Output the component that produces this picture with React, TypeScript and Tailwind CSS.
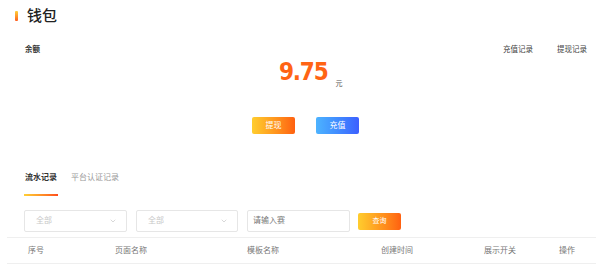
import { ChevronDown } from 'lucide-react';

const columns = [
  { label: '序号', className: 'w-[87px]' },
  { label: '页面名称', className: 'w-[132px]' },
  { label: '模板名称', className: 'w-[134px]' },
  { label: '创建时间', className: 'w-[103px]' },
  { label: '展示开关', className: 'w-[75px]' },
  { label: '操作', className: 'flex-1' },
];

function FilterSelect({ className }: { className: string }) {
  return (
    <div
      className={`h-[22px] flex items-center justify-between pl-[11px] pr-[9px] border border-[#e6e6e6] rounded-[2px] ${className}`}
    >
      <span className="text-[8px] text-[#c8c8c8]">全部</span>
      <ChevronDown className="size-[8px] text-[#b0b0b0]" strokeWidth={1.5} />
    </div>
  );
}

export default function App() {
  return (
    <div className="w-[600px] h-[272px] bg-white overflow-hidden text-[#333] font-['Liberation_Sans','Noto_Sans_CJK_SC',sans-serif]">
      {/* title */}
      <div className="h-[32px] flex items-center pl-[15px]">
        <div className="w-[3px] h-[10px] rounded-[1px] bg-gradient-to-b from-[#ffcf36] to-[#ff5a1f]" />
        <span className="ml-[9px] text-[15px] leading-[16px] font-medium text-[#222]">钱包</span>
      </div>

      {/* balance */}
      <div className="mt-[10px] h-[16px] flex items-center justify-between pl-[25px] pr-[13px]">
        <span className="text-[7.5px] font-bold text-[#333]">余额</span>
        <div className="flex gap-[24px] text-[7.5px] text-[#444]">
          <span>充值记录</span>
          <span>提现记录</span>
        </div>
      </div>

      <div className="mt-[2px] h-[24px] flex items-end pl-[279px]">
        <span className="font-['DejaVu_Sans_Condensed','DejaVu_Sans',sans-serif] text-[24px] leading-[24px] font-bold text-[#ff6414] tracking-[-1.2px]">
          9.75
        </span>
        <span className="ml-[8px] mb-[-4px] text-[7px] leading-[8px] text-[#555]">元</span>
      </div>

      <div className="mt-[33px] flex gap-[21px] pl-[252px]">
        <button className="w-[43px] h-[17px] rounded-[2px] text-[8px] text-white bg-gradient-to-r from-[#ffcd2e] to-[#ff6010]">
          提现
        </button>
        <button className="w-[43px] h-[17px] rounded-[2px] text-[8px] text-white bg-gradient-to-r from-[#4db3ff] to-[#3d5fff]">
          充值
        </button>
      </div>

      {/* tabs */}
      <div className="mt-[38px] flex items-start pl-[24px] gap-[13px]">
        <div className="flex flex-col items-center w-[34px]">
          <span className="text-[8px] leading-[12px] font-bold text-[#333]">流水记录</span>
          <div className="mt-[10px] w-full h-[2px] bg-gradient-to-r from-[#ffcf36] to-[#ff4a1c]" />
        </div>
        <span className="text-[8px] leading-[12px] text-[#999]">平台认证记录</span>
      </div>

      {/* filters */}
      <div className="mt-[14px] flex items-center pl-[24px]">
        <FilterSelect className="w-[103px]" />
        <FilterSelect className="w-[102px] ml-[9px]" />
        <div className="w-[103px] h-[22px] ml-[9px] flex items-center pl-[5px] border border-[#e6e6e6] rounded-[2px]">
          <span className="text-[8px] text-[#777]">请输入赛</span>
        </div>
        <button className="w-[43px] h-[17px] ml-[8px] rounded-[2px] text-[7px] text-white bg-gradient-to-r from-[#ffcd2e] to-[#ff6010]">
          查询
        </button>
      </div>

      {/* table head */}
      <div className="mt-[5px] ml-[7px] mr-[4px] h-[27px] flex items-center border-y border-[#efefef]">
        {columns.map((col) => (
          <span key={col.label} className={`pl-[21px] text-[8px] text-[#777] ${col.className}`}>
            {col.label}
          </span>
        ))}
      </div>
    </div>
  );
}
